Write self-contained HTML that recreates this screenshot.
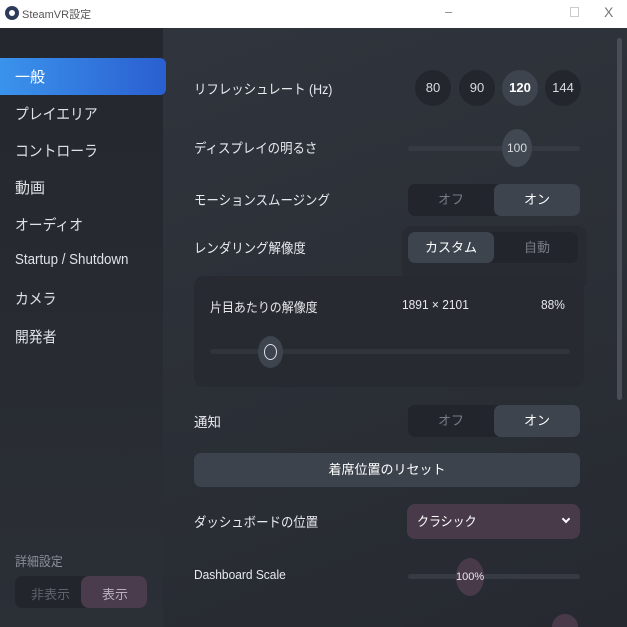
<!DOCTYPE html>
<html><head><meta charset="utf-8"><style>
*{margin:0;padding:0;box-sizing:border-box}
html,body{width:627px;height:627px;overflow:hidden}
body{position:relative;background:#2c3038;font-family:"Liberation Sans","Noto Sans CJK JP",sans-serif;color:#e6e8ec;font-size:13px}
.a{position:absolute;white-space:nowrap}
.t{transform:scaleX(.92);transform-origin:left center}
#title{left:0;top:0;width:627px;height:28px;background:#fff}
#side{left:0;top:28px;width:163px;height:599px;background:linear-gradient(#24272d,#2b2f36)}
#main{left:163px;top:28px;width:464px;height:599px;background:linear-gradient(160deg,#30343c,#262a30)}
.si{left:15px;font-size:15px;color:#dfe2e6}
.lbl{left:194px;font-size:13.5px;color:#e8eaee}
.c{width:36px;height:36px;border-radius:50%;background:#23262c;color:#d8dbe0;text-align:center;line-height:36px;font-size:13px}
.seg{background:#22252b;border-radius:7px}
.on{background:#3e444e;border-radius:7px;color:#fff;text-align:center}
.off{color:#777c85;text-align:center}
.track{height:5px;background:#363a42;border-radius:3px}
</style></head><body>
<div class="a" id="title"></div>
<div class="a" style="left:5px;top:6px;width:14px;height:14px;border-radius:50%;background:#2d3a5a"></div>
<div class="a" style="left:9px;top:10px;width:6px;height:6px;border-radius:50%;background:#fff"></div>
<div class="a" style="left:22px;top:6px;font-size:11px;color:#555">SteamVR設定</div>
<div class="a" style="left:445px;top:4px;font-size:13px;color:#888">–</div>
<div class="a" style="left:570px;top:7px;width:9px;height:10px;border:1px solid #ccc"></div>
<div class="a" style="left:604px;top:4px;font-size:14px;color:#777">X</div>

<div class="a" id="side"></div>
<div class="a" id="main"></div>
<div class="a" style="left:0;top:58px;width:166px;height:37px;border-radius:0 6px 6px 0;background:linear-gradient(90deg,#3a93ec,#2a5fd0)"></div>
<div class="a si" style="top:66px;color:#fff">一般</div>
<div class="a si t" style="top:103px">プレイエリア</div>
<div class="a si t" style="top:140px">コントローラ</div>
<div class="a si" style="top:177px">動画</div>
<div class="a si t" style="top:214px">オーディオ</div>
<div class="a si t" style="top:252px;font-size:14.5px">Startup / Shutdown</div>
<div class="a si t" style="top:288px">カメラ</div>
<div class="a si t" style="top:326px">開発者</div>
<div class="a t" style="left:15px;top:551px;color:#8a8f98;font-size:13px">詳細設定</div>
<div class="a seg" style="left:15px;top:576px;width:132px;height:32px;border-radius:8px"></div>
<div class="a" style="left:81px;top:576px;width:66px;height:32px;border-radius:8px;background:#4a3c4c"></div>
<div class="a" style="left:31px;top:584px;color:#5e636b">非表示</div>
<div class="a" style="left:102px;top:584px;color:#b8b0bc">表示</div>

<div class="a" style="left:617px;top:38px;width:5px;height:362px;border-radius:3px;background:#4a4f57"></div>

<div class="a lbl t" style="top:78px">リフレッシュレート (Hz)</div>
<div class="a c" style="left:415px;top:70px">80</div>
<div class="a c" style="left:459px;top:70px">90</div>
<div class="a c" style="left:502px;top:70px;background:#3e444e;font-weight:bold;color:#fff">120</div>
<div class="a c" style="left:545px;top:70px">144</div>

<div class="a lbl t" style="top:137px">ディスプレイの明るさ</div>
<div class="a track" style="left:408px;top:146px;width:172px"></div>
<div class="a c" style="left:502px;top:129px;width:30px;height:38px;border-radius:50%;background:#424852;line-height:38px;font-size:12px">100</div>

<div class="a lbl t" style="top:189px">モーションスムージング</div>
<div class="a seg" style="left:408px;top:184px;width:172px;height:32px"></div>
<div class="a on" style="left:494px;top:184px;width:86px;height:32px;line-height:32px">オン</div>
<div class="a off" style="left:408px;top:184px;width:86px;line-height:32px">オフ</div>

<div class="a" style="left:402px;top:226px;width:185px;height:60px;border-radius:10px 10px 0 0;background:#282b31"></div>
<div class="a" style="left:194px;top:276px;width:390px;height:111px;border-radius:10px;background:#272a30"></div>
<div class="a lbl t" style="top:237px">レンダリング解像度</div>
<div class="a seg" style="left:408px;top:232px;width:170px;height:31px"></div>
<div class="a on" style="left:408px;top:232px;width:86px;height:31px;line-height:31px">カスタム</div>
<div class="a off" style="left:494px;top:232px;width:86px;line-height:31px">自動</div>
<div class="a t" style="left:210px;top:297px">片目あたりの解像度</div>
<div class="a t" style="left:402px;top:297px">1891 × 2101</div>
<div class="a t" style="left:541px;top:297px">88%</div>
<div class="a track" style="left:210px;top:349px;width:360px;background:#30343b"></div>
<div class="a" style="left:258px;top:336px;width:25px;height:32px;border-radius:50%;background:#3e444e"></div>
<div class="a" style="left:264px;top:344px;width:13px;height:16px;border-radius:50%;border:1.5px solid #dde"></div>

<div class="a lbl" style="top:411px">通知</div>
<div class="a seg" style="left:408px;top:405px;width:172px;height:32px"></div>
<div class="a on" style="left:494px;top:405px;width:86px;height:32px;line-height:32px">オン</div>
<div class="a off" style="left:408px;top:405px;width:86px;line-height:32px">オフ</div>

<div class="a" style="left:194px;top:453px;width:386px;height:34px;border-radius:7px;background:#3d434c;text-align:center;line-height:34px;color:#fff">着席位置のリセット</div>

<div class="a lbl t" style="top:511px">ダッシュボードの位置</div>
<div class="a" style="left:407px;top:504px;width:173px;height:35px;border-radius:8px;background:#493a4a"></div>
<div class="a t" style="left:417px;top:511px;color:#fff">クラシック</div>
<div class="a" style="left:563px;top:516px;width:6px;height:6px;border-right:2px solid #fff;border-bottom:2px solid #fff;transform:rotate(45deg)"></div>

<div class="a lbl t" style="top:567px;font-size:13px">Dashboard Scale</div>
<div class="a track" style="left:408px;top:574px;width:172px"></div>
<div class="a" style="left:456px;top:558px;width:28px;height:38px;border-radius:50%;background:#493a4a;text-align:center;line-height:38px;font-size:11px">100%</div>
<div class="a" style="left:552px;top:614px;width:26px;height:13px;border-radius:13px 13px 0 0;background:#493a4a"></div>
</body></html>
